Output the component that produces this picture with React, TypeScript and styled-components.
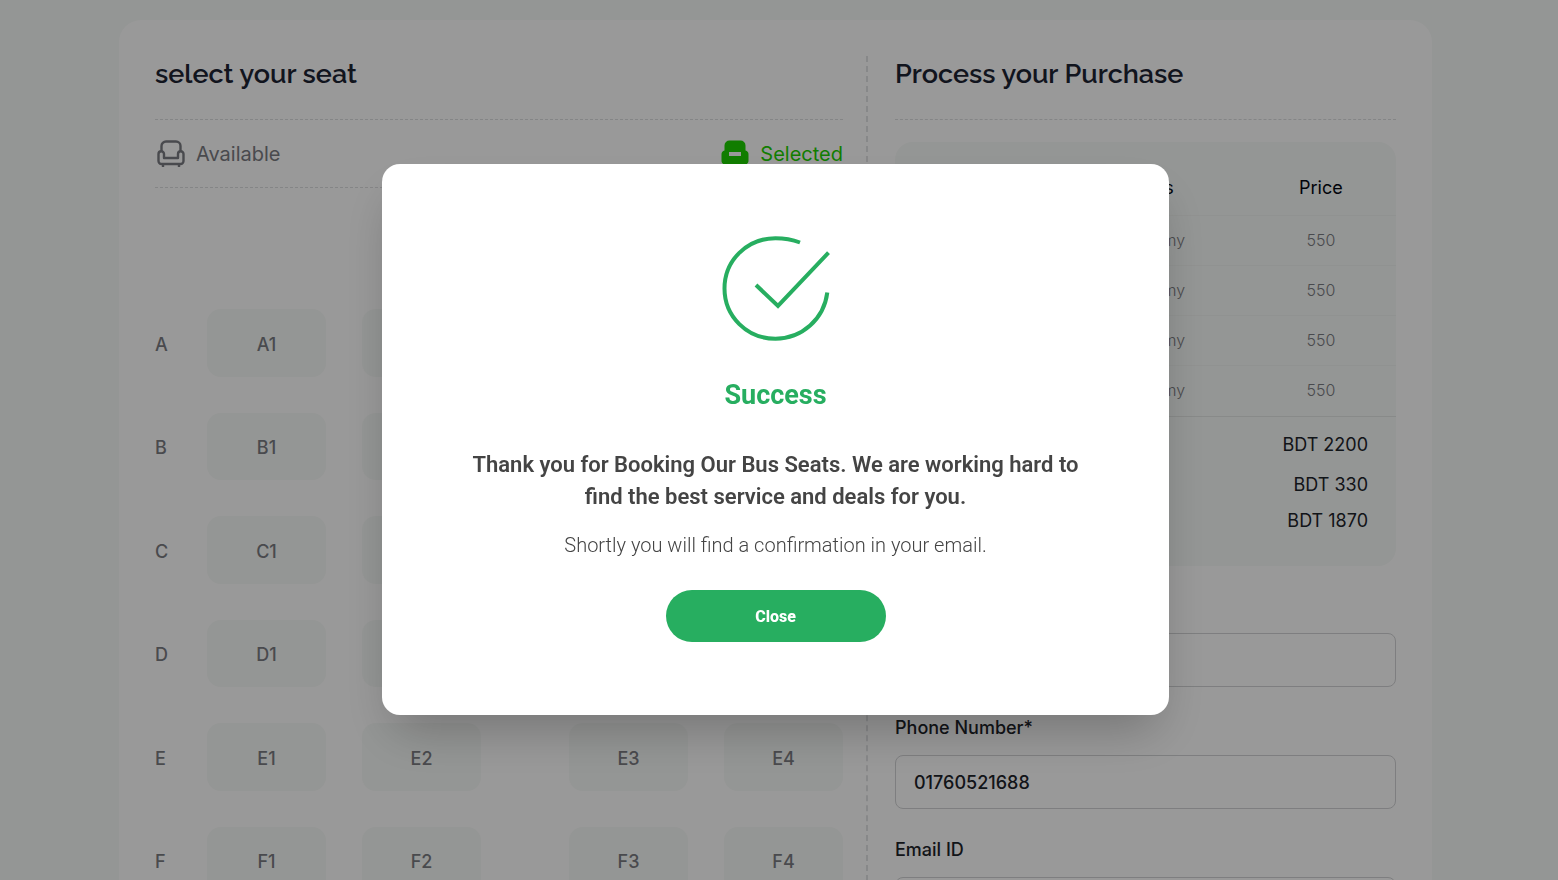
import React from "react";
import styled, { createGlobalStyle, css } from "styled-components";

const Global = createGlobalStyle`
  * { box-sizing: border-box; }
  html { overflow: hidden; }
  body {
    margin: 0;
    padding-right: 7px;
    background: #f7faf8;
    font-family: Inter, "Liberation Sans", sans-serif;
    color: #1d232a;
  }
  h1, h2, h3, p { margin: 0; }
  button, input { font-family: inherit; }
`;

const Page = styled.main`
  padding: 20px 119px;
`;

const Card = styled.section`
  display: grid;
  grid-template-columns: minmax(0, 711fr) minmax(0, 530fr);
  padding: 36px;
  background: #ffffff;
  border-radius: 22px;
`;

const SeatColumn = styled.div`
  padding-right: 23px;
`;

const PurchaseColumn = styled.div`
  padding-left: 27px;
  border-left: 2px dashed #e2e3e5;
`;

const Heading = styled.h2`
  height: 64px;
  border-bottom: 1px dashed #dddee0;
  color: #1d2433;
  font-family: Raleway, Lato, sans-serif;
  font-size: 27px;
  font-weight: 600;
  line-height: 36px;
`;

const Legend = styled.div`
  display: flex;
  justify-content: space-between;
  align-items: center;
  height: 68px;
  border-bottom: 1px dashed #dddee0;
`;

const LegendItem = styled.span<{ $color: string }>`
  display: flex;
  align-items: center;
  gap: 9px;
  color: ${(p) => p.$color};
  font-size: 20px;
  line-height: 28px;
`;

const SeatGrid = styled.div`
  display: grid;
  grid-auto-rows: 1fr;
  gap: 36px;
  min-height: 585px;
  margin-top: 121px;
`;

const SeatRow = styled.div`
  display: grid;
  grid-template-columns: 52px minmax(0, 1fr) minmax(0, 1fr);
  align-items: stretch;
`;

const RowName = styled.span`
  align-self: center;
  padding-top: 4px;
  color: #7b7c82;
  font-size: 18px;
  font-weight: 500;
  line-height: 26px;
`;

const SeatPair = styled.div<{ $end?: boolean }>`
  display: grid;
  grid-template-columns: repeat(2, minmax(0, 1fr));
  gap: 36px;
  ${(p) => (p.$end ? css`padding-left: 44px;` : css`padding-right: 44px;`)}
`;

const Seat = styled.button`
  padding: 3px 0 0;
  border: 0;
  border-radius: 14px;
  background: #f7faf8;
  color: #7b7c82;
  font-size: 18px;
  font-weight: 500;
`;

const Summary = styled.div`
  margin-top: 22px;
  padding-bottom: 27px;
  background: #f7faf8;
  border-radius: 18px;
`;

const Table = styled.table`
  width: 100%;
  border-collapse: collapse;
  table-layout: fixed;
  text-align: center;

  th {
    height: 73px;
    padding: 18px 0 0;
    color: #030712;
    font-size: 18px;
    font-weight: 400;
  }
  th:nth-child(1) { width: 32%; }
  th:nth-child(2) { width: 38%; }
  th:nth-child(3) { width: 30%; }
  td {
    height: 50px;
    padding: 0;
    border-top: 1px solid #f1f4f2;
    color: #7b7c82;
    font-size: 16px;
    font-weight: 300;
  }
`;

const Totals = styled.dl`
  display: grid;
  gap: 10px;
  margin: 1px 0 0;
  padding: 15px 28px 5px;
  border-top: 1px solid #e3e6e4;
`;

const Total = styled.div`
  display: flex;
  justify-content: space-between;
  font-size: 18px;
  line-height: 26px;

  &:first-child { margin-bottom: 4px; }
  dd { margin: 0; }
`;

const Form = styled.form`
  display: grid;
  gap: 28px;
  margin-top: 27px;
`;

const Field = styled.label`
  display: grid;
  gap: 14px;
  font-size: 18px;
  font-weight: 500;
  line-height: 26px;
`;

const Input = styled.input`
  width: 100%;
  height: 54px;
  padding: 0 18px;
  border: 1px solid #d2d3d5;
  border-radius: 8px;
  background: #ffffff;
  color: #1d232a;
  font-size: 18px;
  font-weight: 500;
`;

const Overlay = styled.div`
  position: fixed;
  inset: 0;
  display: flex;
  align-items: center;
  justify-content: center;
  padding: 0 7px 1px 0;
  background: rgba(0, 0, 0, 0.4);
`;

const Dialog = styled.div`
  display: flex;
  flex-direction: column;
  align-items: center;
  width: 787px;
  max-width: 92%;
  padding: 72px 72px 73px;
  border-radius: 18px;
  background: #ffffff;
  box-shadow: 0 25px 50px -12px rgba(0, 0, 0, 0.25);
  color: #444444;
  font-family: Roboto, sans-serif;
  text-align: center;
`;

const Title = styled.h1`
  margin-top: 33px;
  color: #27ae60;
  font-size: 27px;
  font-weight: 700;
  line-height: 36px;
`;

const Message = styled.p`
  margin-top: 36px;
  font-size: 22px;
  font-weight: 600;
  line-height: 32px;
`;

const Note = styled.p`
  margin-top: 17px;
  font-size: 20px;
  font-weight: 300;
  line-height: 30px;
`;

const Close = styled.button`
  width: 220px;
  height: 52px;
  margin-top: 30px;
  border: 0;
  border-radius: 26px;
  background: #27ae60;
  color: #ffffff;
  font-size: 16px;
  font-weight: 800;
`;

const SeatOutline = () => (
  <svg width="32" height="30" viewBox="0 0 32 30" fill="none" stroke="#7b7c82" strokeWidth="2.4" strokeLinejoin="round" aria-hidden="true">
    <path d="M6.500 12V7A4.500 4.500 0 0 1 11 2.500H21A4.500 4.500 0 0 1 25.500 7V12" />
    <path d="M9 19V15a2.750 2.750 0 0 0-5.500 0v7a3 3 0 0 0 3 3h19a3 3 0 0 0 3-3v-7a2.750 2.750 0 0 0-5.500 0v4z" />
    <path d="M8 25v3M24 25v3" />
  </svg>
);

const SeatFilled = () => (
  <svg width="32" height="30" viewBox="0 0 32 30" fill="#1dd100" aria-hidden="true">
    <path fillRule="evenodd" d="M10.500 1.500h11a5 5 0 0 1 5 5v5a4 4 0 0 1 3 4v6a4 4 0 0 1-3 4v2h-3v-2h-15v2h-3v-2a4 4 0 0 1-3-4v-6a4 4 0 0 1 3-4v-5a5 5 0 0 1 5-5zM10 13v4h12v-4z" />
  </svg>
);

const CheckMark = () => (
  <svg width="110" height="108" viewBox="0 0 110 108" fill="none" stroke="#27ae60" strokeWidth="4" aria-hidden="true">
    <path d="M79 6.500C71 3.500 63 2.200 54.500 2.200C26 2.200 3.500 24.500 3.500 52.500C3.500 80.500 26 102.700 54.500 102.700C81 102.700 103 83 106.300 56.500" />
    <path d="M35 49L57 70L107.500 16.700" />
  </svg>
);

const rows = ["A", "B", "C", "D", "E", "F"];
const booked = ["A2", "B2", "C2", "D2"];

export default function App() {
  return (
    <>
      <Global />
      <Page>
        <Card>
          <SeatColumn>
            <Heading>select your seat</Heading>
            <Legend>
              <LegendItem $color="#7b7c82"><SeatOutline />Available</LegendItem>
              <LegendItem $color="#1dd100"><SeatFilled />Selected</LegendItem>
            </Legend>
            <SeatGrid>
              {rows.map((r) => (
                <SeatRow key={r}>
                  <RowName>{r}</RowName>
                  <SeatPair><Seat>{r}1</Seat><Seat>{r}2</Seat></SeatPair>
                  <SeatPair $end><Seat>{r}3</Seat><Seat>{r}4</Seat></SeatPair>
                </SeatRow>
              ))}
            </SeatGrid>
          </SeatColumn>
          <PurchaseColumn>
            <Heading>Process your Purchase</Heading>
            <Summary>
              <Table>
                <thead><tr><th>Seat</th><th>Class</th><th>Price</th></tr></thead>
                <tbody>
                  {booked.map((s) => (
                    <tr key={s}><td>{s}</td><td>Economy</td><td>550</td></tr>
                  ))}
                </tbody>
              </Table>
              <Totals>
                <Total><dt>Total Price</dt><dd>BDT 2200</dd></Total>
                <Total><dt>Discount</dt><dd>BDT 330</dd></Total>
                <Total><dt>Grand Total</dt><dd>BDT 1870</dd></Total>
              </Totals>
            </Summary>
            <Form>
              <Field>Passenger Name*<Input type="text" /></Field>
              <Field>Phone Number*<Input type="tel" defaultValue="01760521688" /></Field>
              <Field>Email ID<Input type="email" /></Field>
            </Form>
          </PurchaseColumn>
        </Card>
      </Page>
      <Overlay>
        <Dialog role="dialog" aria-modal="true" aria-labelledby="dialog-title">
          <CheckMark />
          <Title id="dialog-title">Success</Title>
          <Message>Thank you for Booking Our Bus Seats. We are working hard to find the best service and deals for you.</Message>
          <Note>Shortly you will find a confirmation in your email.</Note>
          <Close type="button">Close</Close>
        </Dialog>
      </Overlay>
    </>
  );
}
